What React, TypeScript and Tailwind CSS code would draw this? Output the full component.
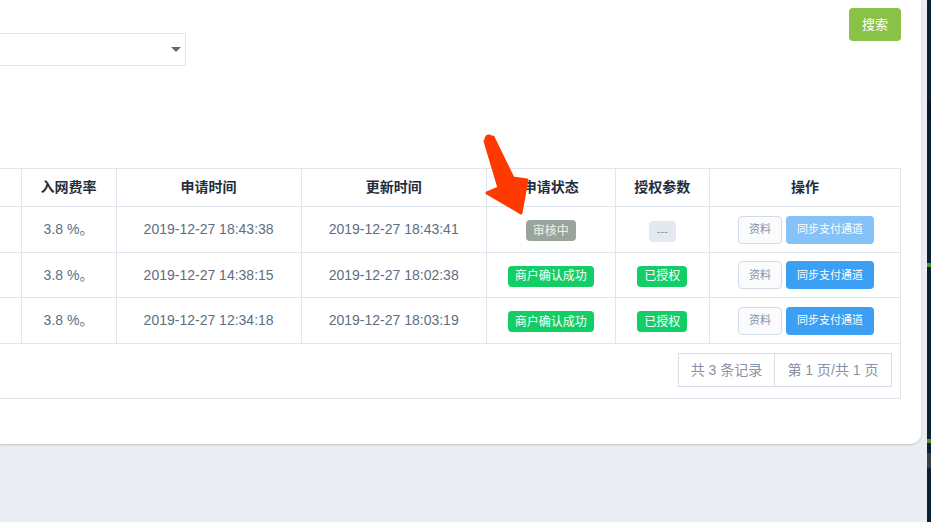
import React from "react";

const cols = [21, 95, 185, 185, 129, 94, 191];

const rows = [
  { apply: "2019-12-27 18:43:38", update: "2019-12-27 18:43:41", pending: true },
  { apply: "2019-12-27 14:38:15", update: "2019-12-27 18:02:38", pending: false },
  { apply: "2019-12-27 12:34:18", update: "2019-12-27 18:03:19", pending: false },
];

const font = { fontFamily: '"Liberation Sans", "Noto Sans CJK SC", sans-serif' };

export default function App() {
  return (
    <div
      className="relative w-[931px] h-[522px] overflow-hidden bg-[#eaedf2] flex items-start"
      style={font}
    >
      <div className="w-[921px] h-[444px] bg-white rounded-br-[10px] shadow-[0_1px_2px_rgba(0,0,0,0.18)] flex flex-col">
        <div className="h-[168px] flex justify-between items-start">
          <div className="mt-[33px] w-[186px] h-[33px] border border-l-0 border-[#e4e6ea] bg-white flex items-center justify-end pr-[4px]">
            <svg width="10" height="6" viewBox="0 0 10 6">
              <polygon points="0,0 10,0 5,5" fill="#5f6b78" />
            </svg>
          </div>
          <button className="mt-[8px] mr-[20px] w-[52px] h-[33px] rounded-[4px] bg-[#89c246] text-white text-[13px] flex items-center justify-center">
            搜索
          </button>
        </div>
        <div className="w-[901px]">
          <table className="table-fixed border-collapse w-[901px]">
            <colgroup>
              {cols.map((w, i) => (
                <col key={i} style={{ width: w }} />
              ))}
            </colgroup>
            <thead>
              <tr className="h-[38px]">
                {["", "入网费率", "申请时间", "更新时间", "申请状态", "授权参数", "操作"].map((h, i) => (
                  <th
                    key={i}
                    className={`border border-[#e0e6ed] text-[14px] font-semibold text-[#1f2d3d] text-center p-0 ${i === 0 ? "border-l-0" : ""}`}
                  >
                    {h}
                  </th>
                ))}
              </tr>
            </thead>
            <tbody>
              {rows.map((r, idx) => (
                <tr key={idx} className={idx === 1 ? "h-[45px]" : "h-[46px]"}>
                  <td className="border border-l-0 border-[#e0e6ed]" />
                  <td className="border border-[#e0e6ed] text-center text-[14px] text-[#5e6d82]">3.8 %。</td>
                  <td className="border border-[#e0e6ed] text-center text-[14px] text-[#5e6d82]">{r.apply}</td>
                  <td className="border border-[#e0e6ed] text-center text-[14px] text-[#5e6d82]">{r.update}</td>
                  <td className="border border-[#e0e6ed] text-center">
                    {r.pending ? (
                      <span className="inline-flex items-center h-[21px] px-[7px] rounded-[4px] bg-[#9aa49c] text-[#eef1ee] text-[12px] leading-none">
                        审核中
                      </span>
                    ) : (
                      <span className="inline-flex items-center h-[21px] px-[7px] rounded-[4px] bg-[#13ce66] text-white text-[12px] leading-none">
                        商户确认成功
                      </span>
                    )}
                  </td>
                  <td className="border border-[#e0e6ed] text-center">
                    {r.pending ? (
                      <span className="inline-flex items-center justify-center h-[21px] w-[27px] rounded-[4px] bg-[#e4e8f1] text-[#8a93a3] text-[11px] leading-none">
                        ---
                      </span>
                    ) : (
                      <span className="inline-flex items-center h-[21px] px-[7px] rounded-[4px] bg-[#13ce66] text-white text-[12px] leading-none">
                        已授权
                      </span>
                    )}
                  </td>
                  <td className="border border-[#e0e6ed] text-center">
                    <div className="flex justify-center items-center gap-[4px] pl-[2px]">
                      <span className="inline-flex items-center justify-center w-[44px] h-[28px] rounded-[4px] border border-[#d3dce6] bg-[#fafbfc] text-[#8492a6] text-[11px]">
                        资料
                      </span>
                      <span
                        className={`inline-flex items-center justify-center w-[88px] h-[28px] rounded-[4px] text-white text-[11px] ${
                          r.pending ? "bg-[#84c2f8]" : "bg-[#3b9ff3]"
                        }`}
                      >
                        同步支付通道
                      </span>
                    </div>
                  </td>
                </tr>
              ))}
            </tbody>
          </table>
          <div className="h-[55px] border border-t-0 border-l-0 border-[#e0e6ed] flex justify-end items-start pt-[9px] pr-[8px]">
            <div className="flex h-[34px] border border-[#d8dde4] text-[14px] text-[#8492a6]">
              <div className="w-[96px] flex items-center justify-center border-r border-[#d8dde4]">共 3 条记录</div>
              <div className="w-[116px] flex items-center justify-center">第 1 页/共 1 页</div>
            </div>
          </div>
        </div>
      </div>
      <div className="w-[6px] h-[522px]" />
      <div className="w-[4px] h-[522px] bg-[#0c2035] flex flex-col">
        <div className="h-[100px]" />
        <div className="h-[20px] bg-[#081827]" />
        <div className="h-[143px]" />
        <div className="h-[4px] bg-[#3aa02e]" />
        <div className="h-[172px]" />
        <div className="h-[4px] bg-[#5a8a3a]" />
        <div className="h-[10px]" />
        <div className="h-[15px] bg-[#3a3f44]" />
      </div>
      <svg
        className="absolute left-0 top-0 pointer-events-none"
        width="931"
        height="522"
        viewBox="0 0 931 522"
      >
        <path
          d="M485 141 L499 188 L487 193 L521 213 L527 180 L513 178 L493 137 Z"
          fill="#ff3a00"
          stroke="#ff3a00"
          strokeWidth="3"
          strokeLinejoin="round"
        />
        <circle cx="489" cy="139" r="4.5" fill="#ff3a00" />
      </svg>
    </div>
  );
}
